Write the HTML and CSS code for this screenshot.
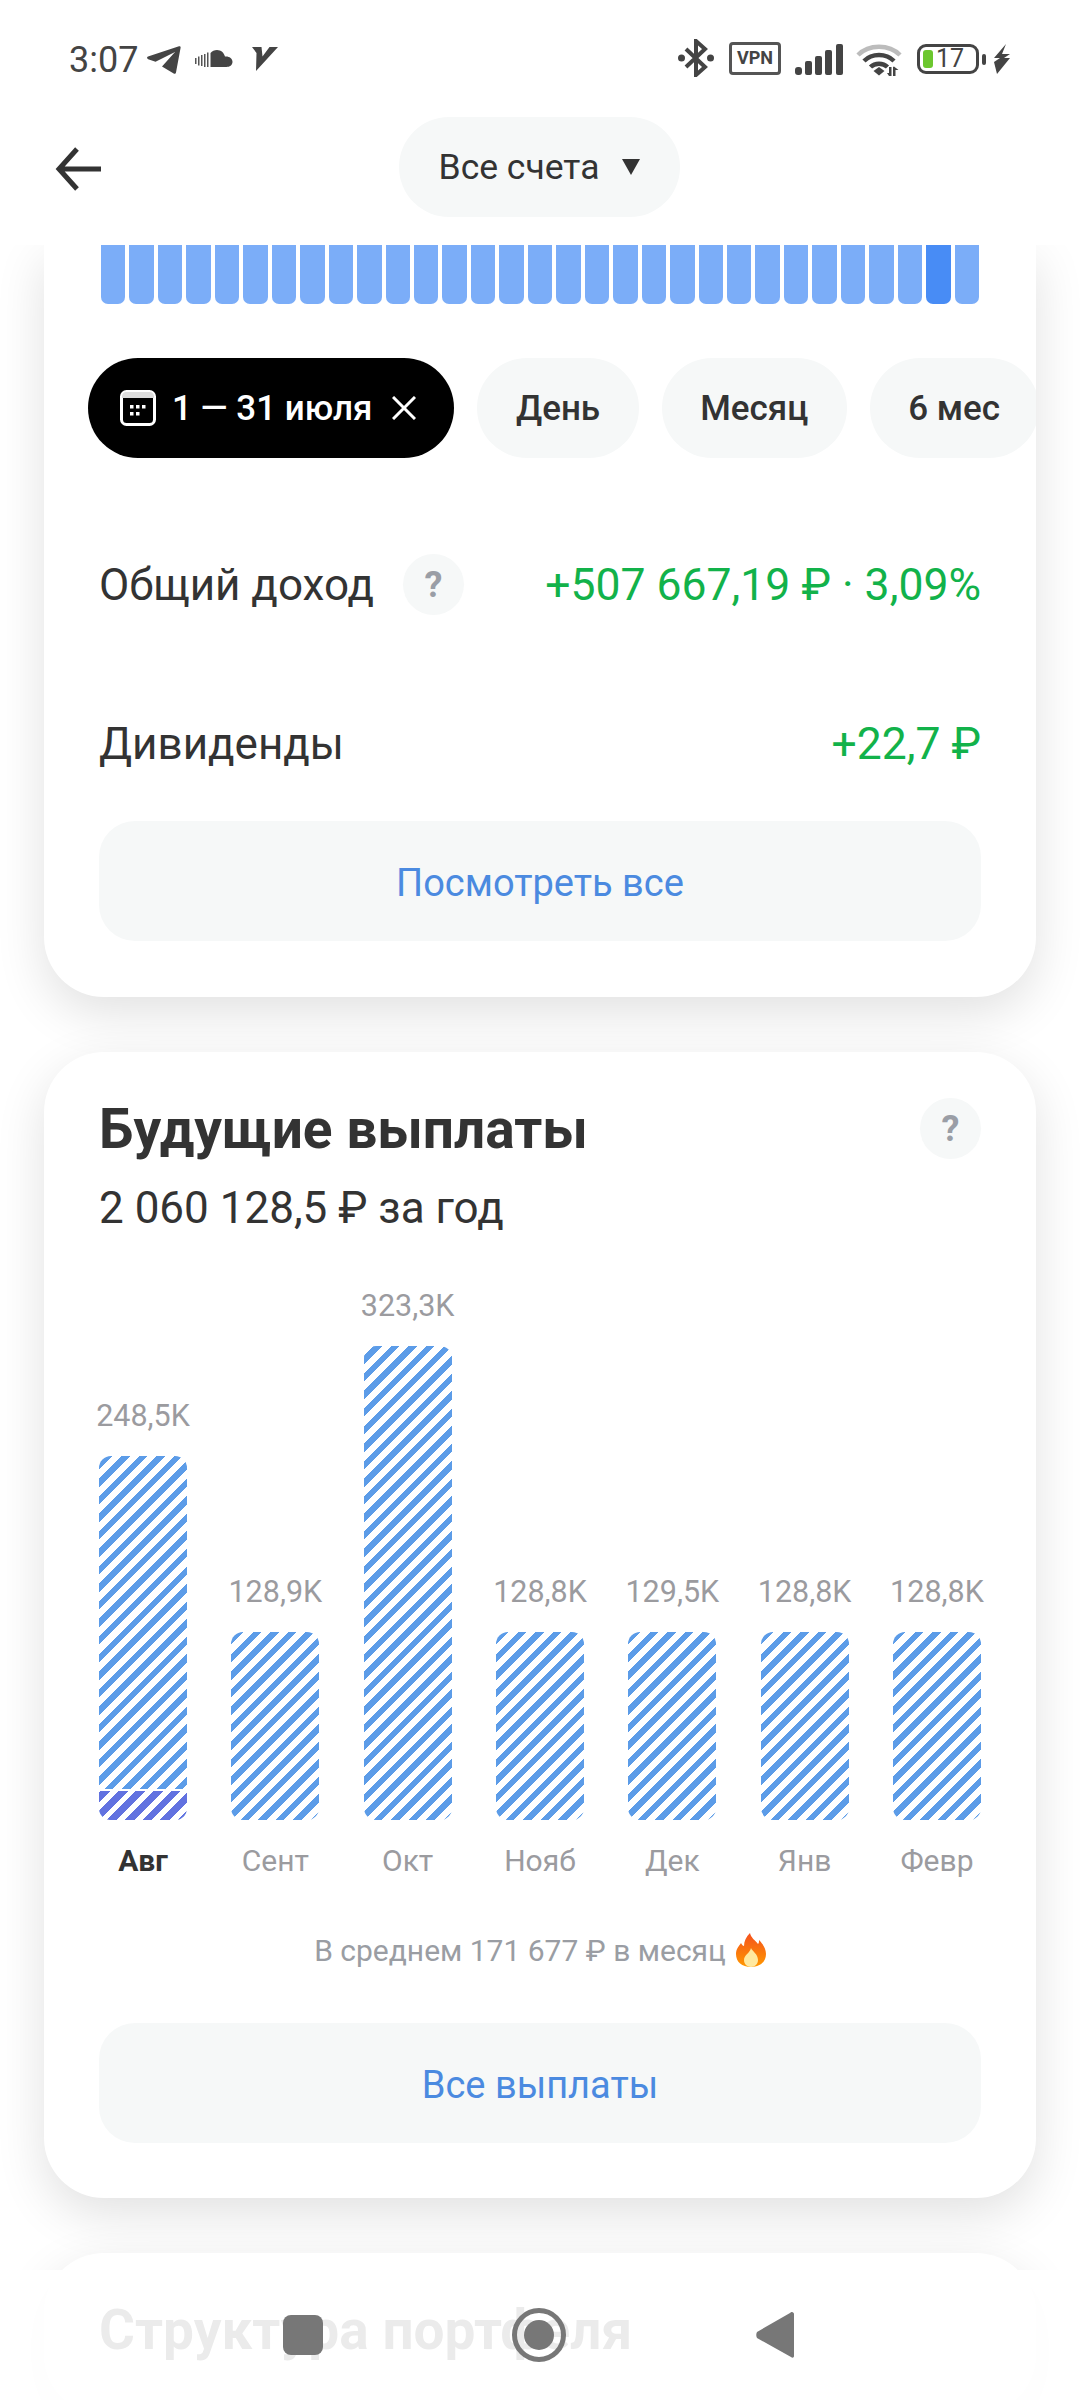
FILE: index.html
```html
<!DOCTYPE html>
<html lang="ru">
<head>
    <meta charset="UTF-8">
    <meta name="viewport" content="width=device-width, initial-scale=1.0">
    <title>Все счета</title>
    <link rel="stylesheet" href="styles.css">
</head>
<body>
    <div class="status-bar">
        <div class="status-left">
            <span class="time">3:07</span>
            <svg width="34" height="28" viewBox="0 0 34 28" class="ic-telegram"><path d="M1 10.500 32 .3c1-.3 1.800.3 1.600 1.400L29 26.500c-.2 1.200-1.300 1.700-2.300 1.100L15 20.500 28 6 8.500 15.800 1.200 13.200C-.3 12.600-.3 11 1 10.500Z" fill="#444"/></svg>
            <svg width="38" height="18" viewBox="0 0 38 18" class="ic-cloud"><g fill="#555"><rect x="0" y="8" width="1.500" height="6"/><rect x="3" y="6.500" width="1.500" height="9"/><rect x="6" y="5" width="1.500" height="11"/><rect x="9" y="4" width="1.500" height="13"/><rect x="12" y="2.500" width="1.500" height="14.500"/></g><path d="M15.500 17V3C17 1 19.500 0 22 0c4 0 7 2.800 8 6.500 4-.5 7.500 1.800 7.500 5.300S34.500 17 31.500 17Z" fill="#444"/></svg>
            <svg width="26" height="24" viewBox="0 0 26 24" class="ic-v"><path d="M0 0H9.500L10.500 9.500 17.500 0H26L4 24 4.500 6Z" fill="#444"/></svg>
        </div>
        <div class="status-right">
            <svg width="36" height="38" viewBox="0 0 36 38" class="ic-bt"><path d="M8 10 27 28 18 36V2L27 10 8 28" fill="none" stroke="#444" stroke-width="4"/><circle cx="3.500" cy="19" r="3.500" fill="#444"/><circle cx="32.500" cy="19" r="3.500" fill="#444"/></svg>
            <span class="vpn">VPN</span>
            <svg width="48" height="31" viewBox="0 0 48 31" class="ic-signal"><g fill="#444"><rect x="0" y="23" width="7" height="8" rx="3"/><rect x="10" y="17" width="7" height="14" rx="2"/><rect x="20" y="12" width="7" height="19" rx="2"/><rect x="30" y="6" width="7" height="25" rx="2"/><rect x="41" y="0" width="7" height="31" rx="2"/></g></svg>
            <svg width="46" height="33" viewBox="0 0 46 33" class="ic-wifi"><path d="M2 12C13 1 33 1 44 12" fill="none" stroke="#bcbcbc" stroke-width="4.500"/><path d="M8 18C16 10 30 10 38 18M14.500 24C19 19.500 27 19.500 31.500 24" fill="none" stroke="#444" stroke-width="4.500"/><path d="M17.500 28 23 24 28.500 28 23 32.500Z" fill="#444"/><path d="M33 24h2.500v9H33l-2-3h2ZM37 33h2.500v-6h3L38 23.500 37 24Z" fill="#444"/></svg>
            <div class="battery">
                <div class="battery-box">
                    <span class="battery-fill"></span>
                    <span class="battery-num">17</span>
                </div>
                <span class="battery-cap"></span>
            </div>
            <svg width="18" height="30" viewBox="0 0 18 30" class="ic-bolt"><path d="M13 0 1 14h6L1 18 4 30 17 14h-6l6-4H9Z" fill="#444"/></svg>
        </div>
    </div>

    <div class="app-bar">
        <svg width="46" height="44" viewBox="0 0 46 44" class="back"><path d="M46 22H4M22 2 4 22 22 42" fill="none" stroke="#333" stroke-width="5"/></svg>
        <div class="account-pill">Все счета <span class="caret"></span></div>
    </div>

    <div class="content">
        <div class="card card-top">
            <div class="day-bars">
                <span></span><span></span><span></span><span></span><span></span><span></span><span></span><span></span><span></span><span></span>
                <span></span><span></span><span></span><span></span><span></span><span></span><span></span><span></span><span></span><span></span>
                <span></span><span></span><span></span><span></span><span></span><span></span><span></span><span></span><span></span>
                <span class="today"></span><span></span>
            </div>
            <div class="chips">
                <div class="chip chip-active">
                    <svg width="36" height="36" viewBox="0 0 36 36"><rect x="1.500" y="1.500" width="33" height="33" rx="5" fill="none" stroke="#fff" stroke-width="3"/><path d="M2 8V6c0-2 2-4 4-4h24c2 0 4 2 4 4v2Z" fill="#ddd"/><g fill="#fff"><rect x="10" y="15" width="3.500" height="3.500"/><rect x="16" y="15" width="3.500" height="3.500"/><rect x="22" y="15" width="3.500" height="3.500"/><rect x="10" y="22" width="3.500" height="3.500"/><rect x="16" y="22" width="3.500" height="3.500"/></g></svg>
                    <span>1 — 31 июля</span>
                    <svg width="24" height="24" viewBox="0 0 24 24" class="chip-close"><path d="M1 1 23 23M23 1 1 23" stroke="#fff" stroke-width="3"/></svg>
                </div>
                <div class="chip">День</div>
                <div class="chip">Месяц</div>
                <div class="chip">6 мес</div>
            </div>
            <div class="row">
                <div class="row-label">Общий доход <span class="help">?</span></div>
                <div class="row-value">+507 667,19 ₽ · 3,09%</div>
            </div>
            <div class="row">
                <div class="row-label">Дивиденды</div>
                <div class="row-value">+22,7 ₽</div>
            </div>
            <div class="wide-btn">Посмотреть все</div>
        </div>

        <div class="card">
            <div class="card-head">
                <h2>Будущие выплаты</h2>
                <span class="help">?</span>
            </div>
            <div class="card-sub">2 060 128,5 ₽ за год</div>
            <div class="chart">
                <div class="col">
                    <div class="col-value">248,5K</div>
                    <div class="col-bar" style="height:364px"><div class="col-bar-part"></div></div>
                    <div class="col-label col-label-now">Авг</div>
                </div>
                <div class="col">
                    <div class="col-value">128,9K</div>
                    <div class="col-bar" style="height:188px"></div>
                    <div class="col-label">Сент</div>
                </div>
                <div class="col">
                    <div class="col-value">323,3K</div>
                    <div class="col-bar" style="height:474px"></div>
                    <div class="col-label">Окт</div>
                </div>
                <div class="col">
                    <div class="col-value">128,8K</div>
                    <div class="col-bar" style="height:188px"></div>
                    <div class="col-label">Нояб</div>
                </div>
                <div class="col">
                    <div class="col-value">129,5K</div>
                    <div class="col-bar" style="height:188px"></div>
                    <div class="col-label">Дек</div>
                </div>
                <div class="col">
                    <div class="col-value">128,8K</div>
                    <div class="col-bar" style="height:188px"></div>
                    <div class="col-label">Янв</div>
                </div>
                <div class="col">
                    <div class="col-value">128,8K</div>
                    <div class="col-bar" style="height:188px"></div>
                    <div class="col-label">Февр</div>
                </div>
            </div>
            <div class="average">
                В среднем 171 677 ₽ в месяц
                <svg width="30" height="34" viewBox="0 0 30 34"><defs><linearGradient id="flame" x1="0" y1="0" x2="0" y2="1"><stop offset="0" stop-color="#f4511e"/><stop offset="1" stop-color="#ff9800"/></linearGradient></defs><path d="M14 0c1 5 5 7 8 11 1-1 1-2 1-4 4 4 7 9 7 14 0 8-6 13-15 13S0 29 0 21c0-5 3-8 5-11 1 2 2 3 3 3 0-5 2-9 6-13Z" fill="url(#flame)"/><path d="M15 15c1 3 7 6 7 12 0 4-3 7-7 7s-7-3-7-7c0-5 6-7 7-12Z" fill="#ffe9a0"/></svg>
            </div>
            <div class="wide-btn">Все выплаты</div>
        </div>

        <div class="card">
            <div class="card-head">
                <h2>Структура портфеля</h2>
            </div>
        </div>
    </div>

    <div class="nav-bar">
        <span class="nav-square"></span>
        <span class="nav-circle"><span></span></span>
        <svg width="38" height="46" viewBox="0 0 38 46"><path d="M36 0c1 0 2 1 2 2v42c0 2-2 2-3 1L1 26c-1-2-1-4 0-6L34 1c1-1 1-1 2-1Z" fill="#777"/></svg>
    </div>
</body>
</html>
```

FILE: styles.css
```css
* {
    box-sizing: border-box;
}
body {
    margin: 0;
    width: 1080px;
    height: 2400px;
    overflow: hidden;
    position: relative;
    background: #fff;
    font-family: Roboto, "Noto Sans", sans-serif;
    color: #333;
}

/* status bar */
.status-bar {
    height: 100px;
    display: flex;
    justify-content: space-between;
    padding: 39px 69px 0 69px;
}
.status-left {
    display: flex;
    align-items: flex-start;
}
.time {
    font-size: 36px;
    line-height: 42px;
    color: #444;
}
.ic-telegram {
    margin: 7px 0 0 9px;
}
.ic-cloud {
    margin: 11px 0 0 14px;
}
.ic-v {
    margin: 8px 0 0 19px;
}
.status-right {
    display: flex;
    align-items: flex-start;
}
.vpn {
    width: 52px;
    height: 33px;
    margin: 3px 0 0 15px;
    border: 3.5px solid #555;
    border-radius: 4px;
    font-size: 18px;
    font-weight: 700;
    line-height: 26px;
    text-align: center;
    color: #444;
}
.ic-signal {
    margin: 5px 0 0 14px;
}
.ic-wifi {
    margin: 4px 0 0 13px;
}
.battery {
    display: flex;
    align-items: center;
    margin: 5px 0 0 15px;
}
.battery-box {
    width: 62px;
    height: 30px;
    border: 3px solid #444;
    border-radius: 9px;
    display: flex;
    align-items: center;
    padding-left: 3px;
}
.battery-fill {
    width: 10px;
    height: 18px;
    border-radius: 3px;
    background: #6cc72e;
}
.battery-num {
    font-size: 25px;
    line-height: 24px;
    margin-left: 3px;
    color: #444;
}
.battery-cap {
    width: 4px;
    height: 11px;
    margin-left: 3px;
    border-radius: 2px;
    background: #444;
}
.ic-bolt {
    margin: 5px 0 0 7px;
}

/* top bar */
.app-bar {
    height: 145px;
    position: relative;
    display: flex;
    justify-content: center;
    padding-top: 17px;
    background: #fff;
    z-index: 2;
}
.back {
    position: absolute;
    left: 55px;
    top: 47px;
}
.account-pill {
    width: 281px;
    height: 100px;
    border-radius: 50px;
    background: #f6f8f8;
    display: flex;
    align-items: center;
    justify-content: center;
    gap: 23px;
    font-size: 35.500px;
    color: #333;
    margin-left: -1px;
}
.caret {
    width: 0;
    height: 0;
    border-left: 9.500px solid transparent;
    border-right: 9.500px solid transparent;
    border-top: 16px solid #333;
}

/* cards */
.content {
    padding: 0 44px;
}
.card {
    background: #fff;
    border-radius: 60px;
    margin-bottom: 55px;
    padding: 46px 55px 55px;
    box-shadow: 0 16px 50px rgba(0, 0, 0, .12);
}
.card-top {
    border-radius: 0 0 60px 60px;
    padding-top: 0;
    padding-bottom: 56px;
}
.day-bars {
    display: flex;
    gap: 4px;
    height: 59px;
    padding: 0 2px;
}
.day-bars span {
    flex: 1;
    background: #7badf8;
    border-radius: 0 0 7px 7px;
}
.day-bars .today {
    background: #488cf5;
}

.chips {
    display: flex;
    gap: 23px;
    margin: 54px -55px 48px -11px;
    overflow: hidden;
}
.chip {
    height: 100px;
    padding: 0 38.500px;
    border-radius: 50px;
    background: #f6f8f8;
    display: flex;
    align-items: center;
    flex-shrink: 0;
    font-size: 35px;
    font-weight: 500;
    color: #333;
}
.chip-active {
    background: #000;
    color: #fff;
    padding: 0 38px 0 32px;
    gap: 16px;
}
.chip-close {
    margin-left: 4px;
}

.row {
    height: 157.500px;
    display: flex;
    align-items: center;
    justify-content: space-between;
}
.row + .row {
    padding-top: 3px;
}
.row-label {
    display: flex;
    align-items: center;
    gap: 29px;
    font-size: 44px;
    color: #333;
}
.row-value {
    font-size: 44.500px;
    color: #12b24a;
}
.help {
    width: 61px;
    height: 61px;
    border-radius: 50%;
    background: #f6f8f8;
    display: flex;
    align-items: center;
    justify-content: center;
    font-size: 36px;
    font-weight: 700;
    color: #9a9ea6;
}
.wide-btn {
    height: 120px;
    padding-top: 3px;
    border-radius: 36px;
    background: #f6f8f8;
    display: flex;
    align-items: center;
    justify-content: center;
    font-size: 38px;
    color: #4b8ae0;
}

.card-head {
    height: 61px;
    display: flex;
    align-items: center;
    justify-content: space-between;
}
.card-head h2 {
    margin: 0;
    font-size: 55px;
    font-weight: 700;
    color: #333;
}
.card-sub {
    margin-top: 25px;
    font-size: 44px;
    line-height: 48px;
    color: #333;
}

/* chart */
.chart {
    display: flex;
    justify-content: space-between;
    align-items: flex-end;
    margin-top: 56px;
}
.col {
    width: 88px;
    display: flex;
    flex-direction: column;
    align-items: center;
}
.col-value {
    font-size: 30.500px;
    line-height: 36px;
    margin-bottom: 22px;
    white-space: nowrap;
    color: #9b9b9f;
}
.col-bar {
    width: 88px;
    border-radius: 12px;
    overflow: hidden;
    position: relative;
    background: repeating-linear-gradient(-45deg, #5c9ce8 0 6px, #fff 6px 12.400px);
}
.col-bar-part {
    position: absolute;
    left: 0;
    right: 0;
    bottom: 0;
    height: 31px;
    border-top: 2px solid #fff;
    background: repeating-linear-gradient(-45deg, #6272e0 0 7px, #fff 7px 12.400px);
}
.col-label {
    margin-top: 23px;
    font-size: 30px;
    line-height: 36px;
    color: #9b9b9f;
}
.col-label-now {
    font-weight: 700;
    color: #333;
}
.average {
    margin: 53px 0 55px;
    height: 36px;
    display: flex;
    align-items: center;
    justify-content: center;
    gap: 10px;
    font-size: 30px;
    color: #9a9da3;
}

/* android nav */
.nav-bar {
    position: absolute;
    left: 0;
    right: 0;
    top: 2270px;
    height: 130px;
    background: rgba(255, 255, 255, .9);
}
.nav-square {
    position: absolute;
    left: 283px;
    top: 45px;
    width: 40px;
    height: 40px;
    border-radius: 8px;
    background: #777;
}
.nav-circle {
    position: absolute;
    left: 512px;
    top: 38px;
    width: 54px;
    height: 54px;
    border: 5px solid #777;
    border-radius: 50%;
    display: flex;
    align-items: center;
    justify-content: center;
}
.nav-circle span {
    width: 30px;
    height: 30px;
    border-radius: 50%;
    background: #777;
}
.nav-bar svg {
    position: absolute;
    left: 756px;
    top: 42px;
}
```
